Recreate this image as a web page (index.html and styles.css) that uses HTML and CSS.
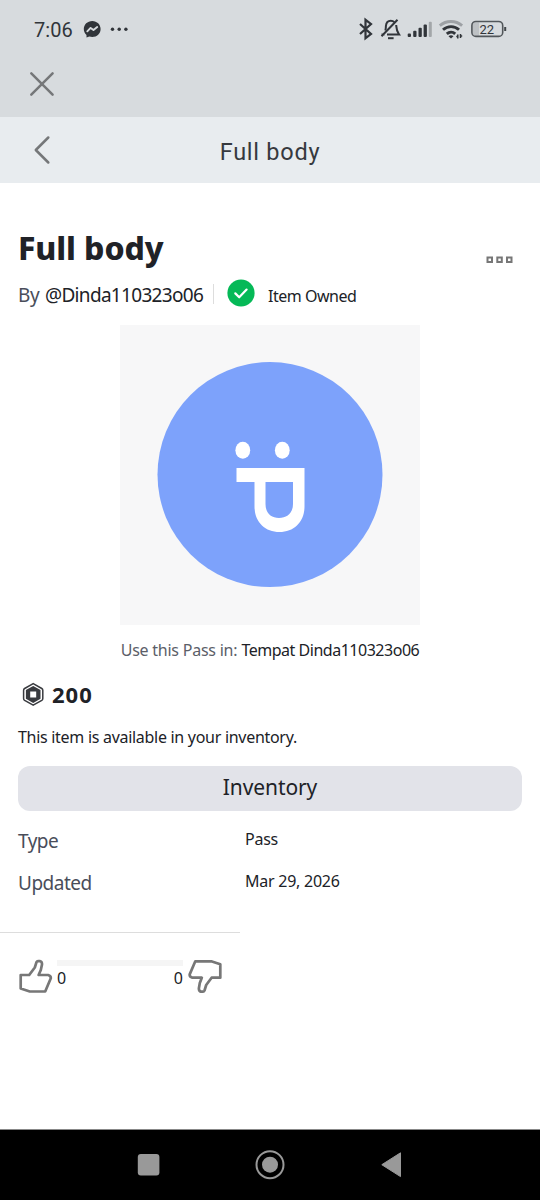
FILE: index.html
```html
<!DOCTYPE html>
<html lang="en">
<head>
<meta charset="utf-8">
<meta name="viewport" content="width=device-width, initial-scale=1">
<title>Full body</title>
<link rel="stylesheet" href="styles.css">
</head>
<body>
<div class="screen">
  <div class="status">
    <span class="clock">7:06</span>
    <svg class="notices" width="50" height="20" viewBox="82 19 50 20">
      <path d="M92.300 21c-4.900 0-8.500 3.600-8.500 8.100 0 2.400 1 4.500 2.700 5.900v2.600l2.800-1c1 .3 2 .5 3 .5 4.700 0 8.300-3.500 8.300-8s-3.600-8.100-8.300-8.100z" fill="#31353a"/>
      <path d="M87.300 31.300l3.300-3.400 2.900 2.200 3.700-3" fill="none" stroke="#d7dbde" stroke-width="1.900" stroke-linecap="round" stroke-linejoin="round"/>
      <g fill="#31353a"><circle cx="112.500" cy="29.300" r="1.700"/><circle cx="119.200" cy="29.300" r="1.700"/><circle cx="125.900" cy="29.300" r="1.700"/></g>
    </svg>
    <svg class="radios" width="150" height="24" viewBox="357 17 150 24">
      <path d="M360 24l11 10-5.500 4.200V19.800l5.500 4.200-11 10" fill="none" stroke="#31353a" stroke-width="2.200"/>
      <path d="M385.300 30.500c.6-1.500.5-2.500.6-4.500.3-3.500 2.200-5.300 4.900-5.300 1.500 0 2.600.5 3.500 1.500M396.200 25c.3 3.600.2 6 2.800 9.400H387" fill="none" stroke="#31353a" stroke-width="2"/>
      <path d="M381.500 36.300l16-16.500M381.500 34.500h3" stroke="#31353a" stroke-width="2"/>
      <path d="M388 38.200h5.600" stroke="#31353a" stroke-width="2"/>
      <g fill="#31353a"><rect x="407.700" y="33.500" width="3.300" height="3.500" rx="1"/><rect x="413.200" y="30.800" width="3.300" height="6.200" rx="1"/><rect x="418.500" y="27.700" width="3.300" height="9.300" rx="1"/><rect x="423.600" y="24.500" width="3.300" height="12.500" rx="1"/></g>
      <rect x="428.800" y="21.800" width="3" height="15.200" rx="1" fill="#a2a6a9"/>
      <g fill="none" stroke-width="2.900"><path d="M439.800 25.600c6.500-5.500 15.800-5.500 22.300 0" stroke="#9da1a5"/><path d="M443 29.800c4.600-4.200 11.500-4.200 16 0M446.800 33.900c2.500-2.300 6-2.300 8.400 0" stroke="#31353a"/></g>
      <path d="M448.500 36.200c1.500-1.200 3.500-1.200 5 0l-2.500 2.200z" fill="#31353a"/>
      <path d="M457.800 34.500v4M456.300 36.500h1.500M460.500 34v4M460.500 36h1.700" stroke="#31353a" stroke-width="1.500"/>
      <path d="M475.500 22.500h3.500v13.300h-3.500q-3-.3-3-3v-7q0-3 3-3.300z" fill="#bdc1c4"/>
      <rect x="471.900" y="21.500" width="30.800" height="14.900" rx="4" fill="none" stroke="#52575b" stroke-width="1.600"/>
      <path d="M505.200 27v4" stroke="#41464a" stroke-width="2"/>
      <text class="charge" x="486.700" y="33.700" text-anchor="middle">22</text>
    </svg>
  </div>
  <div class="closebar">
    <svg width="28" height="28" viewBox="28 70 28 28"><path d="M31.300 73.300l21.300 21.400M52.600 73.300L31.300 94.700" stroke="#757779" stroke-width="2.500" stroke-linecap="round"/></svg>
  </div>
  <div class="navbar">
    <svg width="28" height="32" viewBox="28 134 28 32"><path d="M48.300 137.500L35.800 150l12.500 12.500" fill="none" stroke="#757779" stroke-width="2.500" stroke-linecap="round" stroke-linejoin="round"/></svg>
    <span class="navtitle">Full body</span>
  </div>
  <main class="content">
    <div class="titlerow">
      <h1>Full body</h1>
      <svg class="more" width="28" height="8" viewBox="0 0 28 8" fill="none" stroke="#777" stroke-width="2"><path d="M1.500 1.500h4.500v4.500h-4.500zM11.300 1.500h4.500v4.500h-4.500zM21 1.500h4.500v4.500h-4.500z"/></svg>
    </div>
    <div class="byline">
      <span class="by">By</span><span class="creator">@Dinda110323o06</span>
      <span class="rule"></span>
      <svg width="28" height="28" viewBox="0 0 28 28"><circle cx="14" cy="14" r="13.600" fill="#05b957"/><path d="M8.300 14.400l3.900 3.900 7.400-7.700" fill="none" stroke="#fff" stroke-width="2.200" stroke-linecap="round" stroke-linejoin="round"/></svg>
      <span class="owned">Item Owned</span>
    </div>
    <figure class="thumb">
      <svg width="300" height="300" viewBox="120 325 300 300">
        <circle cx="270" cy="474.600" r="112.500" fill="#7da2fb"/>
        <g fill="#fff"><ellipse cx="242.800" cy="450.200" rx="7.400" ry="8.500"/><ellipse cx="282.300" cy="450.200" rx="7.400" ry="8.500"/><path fill-rule="evenodd" d="M236.500 468H304.500V506.500C304.500 522 294 532 279.500 532S254.500 522 254.500 506.500V482H236.500zM265.500 482V504C265.500 513 271 518 279 518S293 513 293 504V482z"/></g>
      </svg>
    </figure>
    <p class="usage"><span class="muted">Use this Pass in:</span> <span class="place">Tempat Dinda110323o06</span></p>
    <div class="price">
      <svg width="23" height="25" viewBox="0 0 23 25"><path d="M11.200 1.600l8.600 4.900q1 .6 1 1.700v8.300q0 1.200-1 1.800l-8.600 4.900-8.600-4.900q-1-.6-1-1.800V8.200q0-1.100 1-1.700z" fill="none" stroke="#393b3f" stroke-width="1.500" stroke-linejoin="round"/><path fill-rule="evenodd" d="M11.200 3.900l7.300 4.100v8.700l-7.300 4.200-7.300-4.200V8zM8.200 9.400v6h6V9.400z" fill="#393b3f"/></svg>
      <strong>200</strong>
    </div>
    <p class="available">This item is available in your inventory.</p>
    <button class="inventory">Inventory</button>
    <dl class="details">
      <dt class="type">Type</dt><dd class="pass">Pass</dd>
      <dt class="updated">Updated</dt><dd class="date">Mar 29, 2026</dd>
    </dl>
    <section class="votes">
      <svg width="34" height="36" viewBox="19 959 34 36"><path d="M20.700 975h8.500l5.600-7.500 1.700-5.300q.5-1 1.500-1h2.200q2 .5 1.800 3.300l-1.200 5.500-2.200 5h9.500q3 .8 2.700 3.300l-5.600 13.200H29.800l-9.100-3z" fill="none" stroke="#777" stroke-width="2.700" stroke-linejoin="round"/></svg>
      <div class="tally"><div class="meter"></div><div class="counts"><span>0</span><span>0</span></div></div>
      <svg width="34" height="36" viewBox="188 959 34 36"><path d="M220.300 977.700h-8.700l-5.400 7.300-1.700 5.500q-.5 1.200-1.500 1.200h-2.100q-2.200-.7-2-3.500l.9-5.200 2-5.300h-9.500q-3-.8-2.600-3.300l5.600-13.100h15.900l9.100 3z" fill="none" stroke="#777" stroke-width="2.700" stroke-linejoin="round"/></svg>
    </section>
  </main>
  <div class="sysnav">
    <svg width="540" height="70" viewBox="0 1130 540 70"><g fill="#999"><rect x="137.800" y="1154" width="21.600" height="21.600" rx="3"/><circle cx="270" cy="1164.700" r="8"/><path d="M400.500 1152.800v23.800L381.800 1164.700z" stroke="#999" stroke-linejoin="round"/></g><circle cx="270" cy="1164.700" r="13.500" fill="none" stroke="#999" stroke-width="2"/></svg>
  </div>
</div>
</body>
</html>
```

FILE: styles.css
```css
* { box-sizing: border-box; }
body, h1, p, figure, dl, dd { margin: 0; }
body { background: #fff; color: #202227; font-family: "Noto Sans", sans-serif; font-size: 16px; }
svg { display: block; flex: none; }
.screen { width: 540px; height: 1200px; display: flex; flex-direction: column; overflow: hidden; white-space: nowrap; }
.status { height: 58px; background: #d7dbde; display: flex; align-items: center; padding: 0 33px 0 34px; }
.clock { width: 48px; padding-top: 2px; font: 20px/24px Roboto, sans-serif; color: #31353a; letter-spacing: .1px; }
.radios { margin-left: auto; }
.charge { font: 13px Roboto, sans-serif; fill: #31353a; }
.closebar { height: 59px; background: #d7dbde; padding: 12px 28px; }
.navbar { height: 66px; background: #e8ecef; display: grid; grid-template-columns: 28px 1fr 28px; align-items: center; padding: 0 28px; }
.navtitle { text-align: center; font: 23.5px/28px Roboto, sans-serif; color: #36393e; letter-spacing: .75px; padding-top: 4px; }
.content { flex: 1; padding: 42px 18px 0; border-bottom: 1px solid #888; }
.titlerow { height: 46px; display: flex; justify-content: space-between; }
h1 { font-size: 32px; line-height: 46px; font-weight: 800; letter-spacing: -.1px; }
.more { margin: 31px 8px 0 0; }
.byline { height: 42px; padding-top: 4px; display: flex; align-items: center; line-height: 38px; }
.by { width: 27px; font-size: 19px; color: #494d5a; letter-spacing: -.4px; padding-top: 1px; }
.creator { width: 168px; font-size: 19px; letter-spacing: -.68px; padding-top: 1px; }
.rule { width: 1px; height: 20px; background: #ddd; margin-right: 13px; }
.byline svg { margin-top: -3px; }
.owned { margin-left: 13px; font-size: 16px; letter-spacing: -.48px; padding-top: 3px; }
.thumb { width: 300px; height: 300px; margin: 12px auto 0; background: #f7f7f8; }
.usage { margin-top: 12px; line-height: 26px; text-align: center; }
.muted { color: #5b5e68; letter-spacing: -.24px; }
.place { letter-spacing: -.48px; }
.price { height: 34px; margin-top: 14px; padding-left: 4px; display: flex; align-items: center; gap: 7px; }
.price strong { font-size: 22px; line-height: 32px; letter-spacing: 1px; padding-bottom: 1px; }
.available { margin-top: 13px; line-height: 26px; letter-spacing: -.29px; }
.inventory { display: block; width: 100%; height: 45px; margin-top: 16px; padding: 0 0 2px; border: 0; border-radius: 12px; background: #e2e3e9; color: #202227; font: 400 21px/43px "Noto Sans", sans-serif; letter-spacing: -.1px; }
.details { margin-top: 9px; display: grid; grid-template-columns: 227px 1fr; grid-auto-rows: 42px; line-height: 42px; }
.details dt { font-size: 19px; color: #494d5a; letter-spacing: -.5px; }
.details dd { line-height: 38px; letter-spacing: -.25px; }
.votes { width: 240px; height: 74px; margin: 28px 0 0 -18px; border-top: 1px solid #ddd; padding: 26px 18px 0 19px; display: flex; align-items: flex-start; }
.tally { width: 126px; margin: 1px 5px 0 4px; }
.meter { height: 6px; background: #f5f5f5; }
.counts { display: flex; justify-content: space-between; line-height: 24px; }
.sysnav { height: 70px; background: #000; }
```
